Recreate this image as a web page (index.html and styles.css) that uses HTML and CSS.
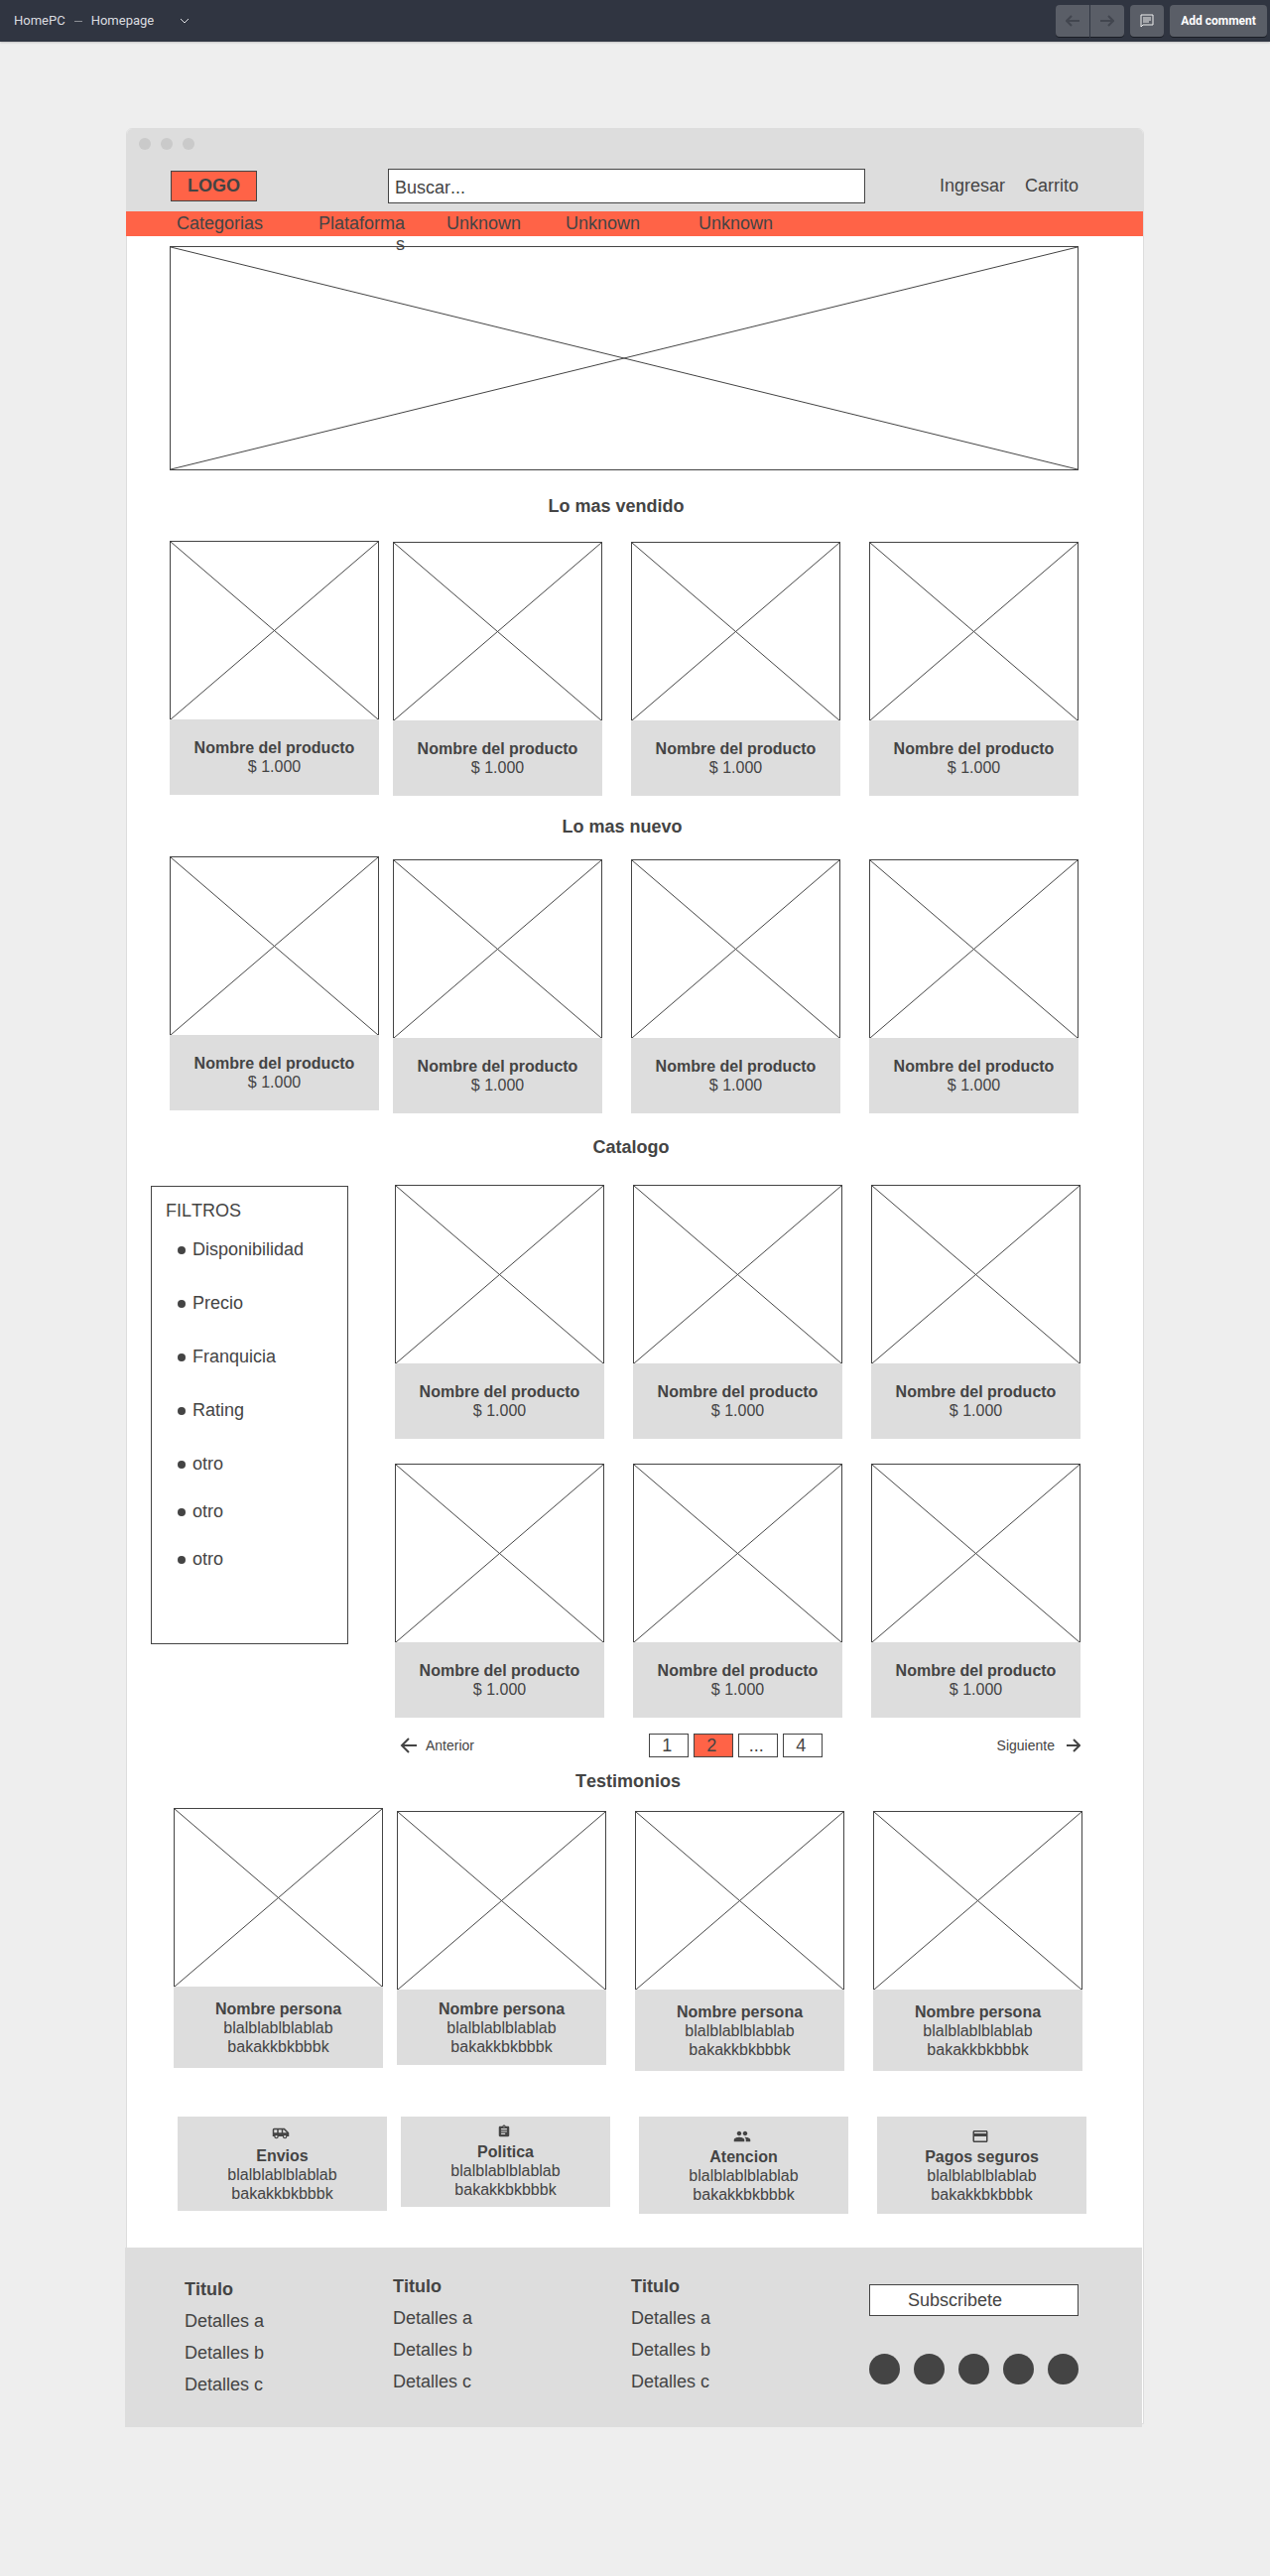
FILE: index.html
```html
<!DOCTYPE html>
<html lang="es">
<head>
<meta charset="utf-8">
<meta name="viewport" content="width=device-width, initial-scale=1">
<title>HomePC – Homepage</title>
<link rel="stylesheet" href="styles.css">
</head>
<body>
<svg class="defs" aria-hidden="true">
  <symbol id="cross" viewBox="0 0 100 100" preserveAspectRatio="none">
    <path d="M0 0L100 100M100 0L0 100" vector-effect="non-scaling-stroke"/>
  </symbol>
</svg>

<div class="topbar">
  <div class="crumbs">
    <span>HomePC</span>
    <span class="crumbs-dash"></span>
    <button class="page-picker" type="button">Homepage
      <svg width="10" height="6" viewBox="0 0 10 6" aria-hidden="true"><path d="M1 1l4 4 4-4"/></svg>
    </button>
  </div>
  <div class="tools">
    <div class="tool-pair">
      <button class="tool tool-prev" type="button" aria-label="Previous">
        <svg class="tool-arrow" width="14" height="14" viewBox="0 0 14 14"><path d="M14 7H1M6 2L1 7l5 5"/></svg>
      </button>
      <button class="tool tool-next" type="button" aria-label="Next">
        <svg class="tool-arrow" width="14" height="14" viewBox="0 0 14 14"><path d="M0 7h13M8 2l5 5-5 5"/></svg>
      </button>
    </div>
    <button class="tool" type="button" aria-label="Comments">
      <svg class="tool-note" width="14" height="14" viewBox="0 0 14 14"><path d="M1 13V1h12v10H3zM3 4h8M3 6h8M3 8h6"/></svg>
    </button>
    <button class="tool tool-wide" type="button">Add comment</button>
  </div>
</div>

<main class="frame">
  <div class="window-dots"><i></i><i></i><i></i></div>
  <header class="site-header">
    <a class="logo" href="#">LOGO</a>
    <input class="search" type="search" placeholder="Buscar..." aria-label="Buscar">
    <div class="account">
      <a href="#">Ingresar</a>
      <a href="#">Carrito</a>
    </div>
  </header>
  <nav class="site-nav">
    <a href="#">Categorias</a>
    <a class="nav-narrow" href="#">Plataformas</a>
    <a href="#">Unknown</a>
    <a href="#">Unknown</a>
    <a href="#">Unknown</a>
  </nav>

  <div class="hero"><svg class="cross"><use href="#cross"/></svg></div>

  <section class="shelf best">
    <h2 class="title">Lo mas vendido</h2>
    <div class="row">
      <article class="card"><svg class="cross"><use href="#cross"/></svg><div class="info"><h3>Nombre del producto</h3><p>$ 1.000</p></div></article>
      <article class="card"><svg class="cross"><use href="#cross"/></svg><div class="info"><h3>Nombre del producto</h3><p>$ 1.000</p></div></article>
      <article class="card"><svg class="cross"><use href="#cross"/></svg><div class="info"><h3>Nombre del producto</h3><p>$ 1.000</p></div></article>
      <article class="card"><svg class="cross"><use href="#cross"/></svg><div class="info"><h3>Nombre del producto</h3><p>$ 1.000</p></div></article>
    </div>
  </section>

  <section class="shelf fresh">
    <h2 class="title">Lo mas nuevo</h2>
    <div class="row staggered">
      <article class="card"><svg class="cross"><use href="#cross"/></svg><div class="info"><h3>Nombre del producto</h3><p>$ 1.000</p></div></article>
      <article class="card"><svg class="cross"><use href="#cross"/></svg><div class="info"><h3>Nombre del producto</h3><p>$ 1.000</p></div></article>
      <article class="card"><svg class="cross"><use href="#cross"/></svg><div class="info"><h3>Nombre del producto</h3><p>$ 1.000</p></div></article>
      <article class="card"><svg class="cross"><use href="#cross"/></svg><div class="info"><h3>Nombre del producto</h3><p>$ 1.000</p></div></article>
    </div>
  </section>

  <section class="catalog">
    <h2 class="title">Catalogo</h2>
    <div class="catalog-body">
      <aside class="filters">
        <h3>FILTROS</h3>
        <ul>
          <li>Disponibilidad</li>
          <li>Precio</li>
          <li>Franquicia</li>
          <li>Rating</li>
          <li class="other">otro</li>
          <li class="other">otro</li>
          <li class="other">otro</li>
        </ul>
      </aside>
      <div class="products">
        <article class="card"><svg class="cross"><use href="#cross"/></svg><div class="info"><h3>Nombre del producto</h3><p>$ 1.000</p></div></article>
        <article class="card"><svg class="cross"><use href="#cross"/></svg><div class="info"><h3>Nombre del producto</h3><p>$ 1.000</p></div></article>
        <article class="card"><svg class="cross"><use href="#cross"/></svg><div class="info"><h3>Nombre del producto</h3><p>$ 1.000</p></div></article>
        <article class="card"><svg class="cross"><use href="#cross"/></svg><div class="info"><h3>Nombre del producto</h3><p>$ 1.000</p></div></article>
        <article class="card"><svg class="cross"><use href="#cross"/></svg><div class="info"><h3>Nombre del producto</h3><p>$ 1.000</p></div></article>
        <article class="card"><svg class="cross"><use href="#cross"/></svg><div class="info"><h3>Nombre del producto</h3><p>$ 1.000</p></div></article>
      </div>
    </div>
    <nav class="pager" aria-label="Paginas">
      <a class="step" href="#"><svg width="17" height="16" viewBox="0 0 17 16" aria-hidden="true"><path d="M17 8H2M9 1L2 8l7 7"/></svg>Anterior</a>
      <div class="pages">
        <a href="#">1</a>
        <a class="current" href="#" aria-current="page">2</a>
        <a href="#">...</a>
        <a href="#">4</a>
      </div>
      <a class="step step-next" href="#">Siguiente<svg width="14" height="14" viewBox="0 0 14 14" aria-hidden="true"><path d="M0 7h13M7 1l6 6-6 6"/></svg></a>
    </nav>
  </section>

  <section class="reviews">
    <h2 class="title">Testimonios</h2>
    <div class="row staggered">
      <article class="card"><svg class="cross"><use href="#cross"/></svg><div class="info"><h3>Nombre persona</h3><p>blalblablblablab</p><p>bakakkbkbbbk</p></div></article>
      <article class="card"><svg class="cross"><use href="#cross"/></svg><div class="info"><h3>Nombre persona</h3><p>blalblablblablab</p><p>bakakkbkbbbk</p></div></article>
      <article class="card"><svg class="cross"><use href="#cross"/></svg><div class="info"><h3>Nombre persona</h3><p>blalblablblablab</p><p>bakakkbkbbbk</p></div></article>
      <article class="card"><svg class="cross"><use href="#cross"/></svg><div class="info"><h3>Nombre persona</h3><p>blalblablblablab</p><p>bakakkbkbbbk</p></div></article>
    </div>
  </section>

  <section class="services row">
    <article class="service">
      <svg width="18" height="18" viewBox="0 0 24 24" aria-hidden="true"><path d="M17 5H3a2 2 0 0 0-2 2v9h2a3 3 0 0 0 6 0h5.500a3 3 0 0 0 6 0H23v-5l-6-6zM3 11V7h4v4H3zm3 6.500a1.500 1.500 0 1 1 0-3 1.500 1.500 0 0 1 0 3zm7-6.500H9V7h4v4zm4.500 6.500a1.500 1.500 0 1 1 0-3 1.500 1.500 0 0 1 0 3zM15 11V7h1l4 4h-5z"/></svg>
      <h3>Envios</h3><p>blalblablblablab</p><p>bakakkbkbbbk</p>
    </article>
    <article class="service">
      <svg width="14" height="14" viewBox="0 0 24 24" aria-hidden="true"><path d="M19 3h-4.180C14.400 1.840 13.300 1 12 1c-1.300 0-2.400.840-2.820 2H5c-1.100 0-2 .9-2 2v14c0 1.100.9 2 2 2h14c1.100 0 2-.9 2-2V5c0-1.100-.9-2-2-2zm-7 0c.55 0 1 .45 1 1s-.45 1-1 1-1-.45-1-1 .45-1 1-1zm2 14H7v-2h7v2zm3-4H7v-2h10v2zm0-4H7V7h10v2z"/></svg>
      <h3>Politica</h3><p>blalblablblablab</p><p>bakakkbkbbbk</p>
    </article>
    <article class="service roomy">
      <svg width="18" height="18" viewBox="0 0 24 24" aria-hidden="true"><path d="M16 11c1.660 0 2.990-1.340 2.990-3S17.660 5 16 5c-1.660 0-3 1.340-3 3s1.340 3 3 3zm-8 0c1.660 0 2.990-1.340 2.990-3S9.660 5 8 5C6.340 5 5 6.340 5 8s1.340 3 3 3zm0 2c-2.330 0-7 1.170-7 3.500V19h14v-2.500c0-2.330-4.670-3.500-7-3.500zm8 0c-.29 0-.62.02-.97.05 1.160.840 1.970 1.970 1.970 3.450V19h6v-2.500c0-2.330-4.670-3.500-7-3.500z"/></svg>
      <h3>Atencion</h3><p>blalblablblablab</p><p>bakakkbkbbbk</p>
    </article>
    <article class="service roomy">
      <svg width="18" height="18" viewBox="0 0 24 24" aria-hidden="true"><path d="M20 4H4c-1.110 0-1.990.89-1.990 2L2 18c0 1.110.89 2 2 2h16c1.110 0 2-.89 2-2V6c0-1.110-.89-2-2-2zm0 14H4v-6h16v6zm0-10H4V6h16v2z"/></svg>
      <h3>Pagos seguros</h3><p>blalblablblablab</p><p>bakakkbkbbbk</p>
    </article>
  </section>

  <footer class="site-footer">
    <div class="links"><h3>Titulo</h3><a href="#">Detalles a</a><a href="#">Detalles b</a><a href="#">Detalles c</a></div>
    <div class="links"><h3>Titulo</h3><a href="#">Detalles a</a><a href="#">Detalles b</a><a href="#">Detalles c</a></div>
    <div class="links"><h3>Titulo</h3><a href="#">Detalles a</a><a href="#">Detalles b</a><a href="#">Detalles c</a></div>
    <div class="contact">
      <input class="subscribe" type="email" placeholder="Subscribete" aria-label="Subscribete">
      <div class="social">
        <a href="#" aria-label="Red social 1"></a>
        <a href="#" aria-label="Red social 2"></a>
        <a href="#" aria-label="Red social 3"></a>
        <a href="#" aria-label="Red social 4"></a>
        <a href="#" aria-label="Red social 5"></a>
      </div>
    </div>
  </footer>
</main>
</body>
</html>
```
FILE: styles.css
```css
:root {
  --ink: #444;
  --grey: #ddd;
  --accent: #ff6347;
}

* { box-sizing: border-box; }

body {
  margin: 0;
  min-height: 100vh;
  background: #eee;
  color: var(--ink);
  font: 18px/21px "Liberation Sans", Arial, sans-serif;
  font-kerning: none;
}

h2, h3, p, ul { margin: 0; padding: 0; }
a { color: inherit; text-decoration: none; }
button, input { font: inherit; color: inherit; border-radius: 0; margin: 0; }
svg { display: block; }
.defs { position: absolute; width: 0; height: 0; }

/* Viewer toolbar */
.topbar {
  display: flex;
  align-items: center;
  justify-content: space-between;
  height: 42px;
  padding: 0 3px 0 14px;
  background: #303541;
  box-shadow: 0 1px 2px rgba(0, 0, 0, .2);
  color: #dcdde0;
  font: 13px/16px Roboto, sans-serif;
}
.crumbs { display: flex; align-items: center; gap: 9px; }
.crumbs-dash { width: 8px; height: 1px; background: #8b8e95; }
.page-picker {
  display: flex;
  align-items: center;
  gap: 26px;
  padding: 0;
  border: 0;
  background: none;
}
.page-picker svg { fill: none; stroke: #dcdde0; }
.tools { display: flex; gap: 6px; }
.tool-pair { display: flex; gap: 1px; }
.tool {
  display: flex;
  align-items: center;
  justify-content: center;
  width: 34px;
  height: 32px;
  padding: 0;
  border: 0;
  border-radius: 4px;
  background: #5a5e67;
  box-shadow: 0 1px 0 #1b1e26;
}
.tool-prev { border-radius: 4px 0 0 4px; }
.tool-next { border-radius: 0 4px 4px 0; }
.tool-wide { width: 98px; color: #fff; font-weight: 700; font-size: 12px; }
.tool-arrow { fill: none; stroke: #42464f; stroke-width: 2; }
.tool-note { fill: none; stroke: #f0f0f1; }

/* Page frame */
.frame {
  margin: 87px 127px 154px;
  border: 1px solid var(--grey);
  border-radius: 6px 6px 0 0;
  background: #fff;
}
.window-dots {
  display: flex;
  gap: 10px;
  padding: 9px 12px 18px;
  background: var(--grey);
  border-radius: 5px 5px 0 0;
}
.window-dots i { width: 12px; height: 12px; border-radius: 50%; background: #cacaca; }

.site-header {
  display: flex;
  align-items: center;
  padding: 1px 65px 8px 44px;
  background: var(--grey);
}
.logo {
  width: 87px;
  padding: 4px 0;
  border: 1px solid var(--ink);
  background: var(--accent);
  font-weight: 700;
  text-align: center;
}
.search, .subscribe {
  border: 1px solid var(--ink);
  background: #fff;
  outline: 0;
  appearance: none;
}
.search { flex: 1; min-width: 0; height: 35px; margin: 0 75px 0 132px; padding: 4px 6px 0; }
::placeholder { color: var(--ink); opacity: 1; }
.account { display: flex; gap: 20px; }

.site-nav {
  display: grid;
  grid-template-columns: 140px 132px 120px 134px auto;
  height: 25px;
  margin-left: -1px;
  padding: 2px 0 0 51px;
  background: var(--accent);
}
.nav-narrow { width: 90px; overflow-wrap: anywhere; text-align: right; }

/* Crossed-box placeholders */
.cross {
  width: 100%;
  height: 180px;
  border: 1px solid var(--ink);
  fill: none;
  stroke: var(--ink);
}
.hero { padding: 10px 65px 0 43px; }
.hero .cross { height: 226px; }
.card .cross { border-bottom: 0; }

.title { font-size: 18px; line-height: 21px; text-align: center; }

/* Product rows */
.row {
  display: grid;
  grid-template-columns: 1fr 14px 1fr 29px 1fr 29px 1fr;
  align-items: start;
}
.row > :nth-child(1) { grid-column: 1; }
.row > :nth-child(2) { grid-column: 3; }
.row > :nth-child(3) { grid-column: 5; }
.row > :nth-child(4) { grid-column: 7; }
.best .card:not(:first-child) { margin-top: 1px; }
.staggered > :not(:first-child) { margin-top: 3px; }

.info, .service {
  background: var(--grey);
  font-size: 16px;
  line-height: 19px;
  text-align: center;
}
.info { padding: 19px 0; }
.info h3, .service h3 { font-size: inherit; }

.shelf { padding: 0 65px 0 43px; }
.best { padding-top: 26px; }
.best .title { padding: 0 16px 24px 0; }
.fresh { padding-top: 21px; }
.fresh .title { padding: 0 4px 19px 0; }

/* Catalog */
.catalog { padding: 24px 63px 0 24px; }
.catalog .title { padding: 0 0 27px 31px; }
.catalog-body {
  display: grid;
  grid-template-columns: 199px 1fr;
  gap: 47px;
  align-items: start;
}
.filters {
  margin-top: 1px;
  padding: 14px 14px 74px;
  border: 1px solid var(--ink);
}
.filters h3 { padding-bottom: 18px; font-size: 18px; font-weight: 400; }
.filters ul { list-style: none; padding-left: 12px; }
.filters li { display: flex; align-items: center; gap: 7px; margin-top: 33px; }
.filters li:first-child { margin-top: 0; }
.filters .other + .other { margin-top: 27px; }
.filters li::before {
  content: "";
  width: 8px;
  height: 8px;
  border-radius: 50%;
  background: var(--ink);
}
.products {
  display: grid;
  grid-template-columns: repeat(3, 1fr);
  gap: 25px 29px;
}

.pager {
  display: flex;
  justify-content: space-between;
  align-items: center;
  padding: 16px 0 0 251px;
}
.step { display: flex; align-items: center; gap: 9px; font-size: 14px; }
.step-next { gap: 12px; }
.step svg { fill: none; stroke: var(--ink); stroke-width: 2; }
.pages { display: flex; gap: 5px; }
.pages a {
  width: 40px;
  height: 24px;
  padding-right: 3px;
  border: 1px solid var(--ink);
  line-height: 23px;
  text-align: center;
}
.pages .current { background: var(--accent); }

/* Testimonials and services */
.reviews { padding: 14px 61px 0 47px; }
.reviews .title { padding-bottom: 16px; }
.reviews .info { padding: 13px 0 12px; }
.reviews .card:nth-child(2) .info { padding: 10px 0 9px; }

.services { padding: 46px 57px 34px 51px; }
.service { padding: 8px 0; }
.service svg {
  box-sizing: content-box;
  margin: 0 auto 4px;
  padding-right: 4px;
  fill: var(--ink);
}
.roomy { padding: 11px 0 10px; }
.roomy svg { margin-bottom: 2px; }

/* Footer: wider than the frame's border on the left, and hangs below it */
.site-footer {
  display: grid;
  grid-template-columns: 210fr 240fr 240fr 211fr;
  margin: 0 1px -4px -2px;
  padding: 29px 64px 32px 60px;
  background: var(--grey);
}
.links { display: flex; flex-direction: column; align-items: start; gap: 11px; }
.links:first-child { padding-top: 3px; }
.links h3 { font-size: 18px; }
.contact { padding-top: 8px; }
.subscribe { width: 100%; height: 32px; padding: 0 38px; display: block; }
.social { display: flex; justify-content: space-between; padding-top: 38px; }
.social a { width: 31px; height: 31px; border-radius: 50%; background: var(--ink); }
```
